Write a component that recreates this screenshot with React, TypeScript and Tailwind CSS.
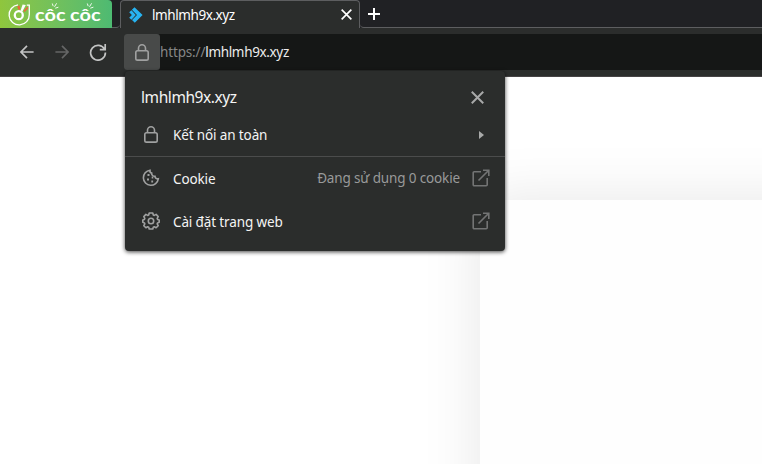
import type { ReactNode } from "react";

type IconProps = { className?: string };

const FONT = "font-['Noto_Sans','Open_Sans',sans-serif]";

function CocCocMark() {
  return (
    <svg width="24" height="24" viewBox="0 0 24 24" fill="none" className="shrink-0">
      <path d="M11 2.800A10.100 10.100 0 1 0 22.300 12.500V3.200h-2.500" stroke="#fff" strokeWidth="1.300" />
      <circle cx="11.800" cy="13.200" r="4" stroke="#fff" strokeWidth="2.300" />
      <path d="M11.300 7.500L10.300 4.200 12.600 3.600 13.200 7.800z" fill="#f0603c" />
      <path d="M13.600 8.500L15.600 2.600 18.800 3 15.400 9.600z" fill="#fff" />
      <path d="M16.500 9L20.400 4.600 21.200 6.200 17.600 10z" fill="#f0603c" />
    </svg>
  );
}

function Word() {
  return (
    <span className="relative inline-block w-[31px]">
      <span className="inline-block origin-left scale-x-[1.14]">côc</span>
      <svg width="8" height="7" viewBox="0 0 8 7" className="absolute -top-[3px] left-[16px]" stroke="#fff" strokeWidth="0.900">
        <path d="M1.300 0.500L2.200 3.200M5.600 0.300L3.500 3.800M7.400 4.200L4.300 5.200" />
      </svg>
    </span>
  );
}

function SiteMark() {
  return (
    <svg width="14" height="16" viewBox="0 0 14 16" className="shrink-0">
      <path d="M5.500 0.200L13.600 8 5.800 15.800 3 13.100 8 8 2.900 2.800z" fill="#27b3f0" />
      <path d="M0.200 5.200L2.400 3.200 6.800 8 2.400 12.800 0.200 10.800 2.900 8z" fill="#27b3f0" />
    </svg>
  );
}

function Cross({ className }: IconProps) {
  return (
    <svg width="13" height="13" viewBox="0 0 12 12" fill="none" stroke="currentColor" className={className}>
      <path d="M0.700 0.700l10.600 10.600M11.300 0.700L0.700 11.300" strokeWidth="1.800" />
    </svg>
  );
}

function Arrow({ className }: IconProps) {
  return (
    <svg width="14" height="14" viewBox="0 0 14 14" fill="none" stroke="currentColor" strokeWidth="1.700" className={className}>
      <path d="M7 0.800L0.900 7 7 13.200M1 7h12.600" />
    </svg>
  );
}

function Reload() {
  return (
    <svg width="18" height="18" viewBox="0 0 18 18" fill="none" stroke="currentColor" strokeWidth="1.700">
      <path d="M15.600 6.400A7.400 7.400 0 1 0 16.400 9.600M16.200 1v5.600h-5.400" />
    </svg>
  );
}

function Lock({ className }: IconProps) {
  return (
    <svg width="14" height="17" viewBox="0 0 14 17" fill="none" stroke="currentColor" strokeWidth="1.600" className={className}>
      <rect x="0.800" y="6.700" width="12.400" height="9.400" rx="1.700" />
      <path d="M3.500 6.500V4.300a3.500 3.500 0 0 1 7 0v2.200" />
    </svg>
  );
}

function Cookie() {
  return (
    <svg width="18" height="18" viewBox="0 0 18 18" fill="none" stroke="currentColor" strokeWidth="1.600">
      <path d="M8 1.300A7.500 7.500 0 1 0 16.300 9.800 2.600 2.600 0 0 1 13 7.400 3 3 0 0 1 9.700 4.100 2.400 2.400 0 0 1 8 1.300z" />
      <path d="M5.500 6h2M5 10.600h2M9.700 8.600h1.600M9.300 12.400h1.800" strokeWidth="2" />
    </svg>
  );
}

function Gear() {
  return (
    <svg width="18" height="18" viewBox="0 0 18 18" fill="none" stroke="currentColor" strokeWidth="1.600" strokeLinejoin="round">
      <path d="M7.200 1h3.600l.500 2 1 .400 1.800-1 2.100 2.200-1 1.800.400 1 1.600.500v2.400l-1.600.600-.400 1 1 1.800-2.100 2.100-1.800-1-1 .400-.500 1.800H7.200l-.500-1.800-1-.400-1.800 1-2.100-2.100 1-1.800-.400-1L.8 10.300V7.900l1.600-.500.400-1-1-1.800 2.100-2.200 1.800 1 1-.400z" />
      <circle cx="9" cy="9" r="2.700" />
    </svg>
  );
}

function External() {
  return (
    <svg width="18" height="18" viewBox="0 0 18 18" fill="none" stroke="currentColor" strokeWidth="1.600">
      <path d="M9 2.700H2.200a1 1 0 0 0-1 1v12a1 1 0 0 0 1 1h12a1 1 0 0 0 1-1V9M11 1.200h5.800V7M16.500 1.500L6.500 11.500" />
    </svg>
  );
}

function Row({ icon, label, children, className }: { icon: ReactNode; label: ReactNode; children?: ReactNode; className: string }) {
  return (
    <div className={`flex items-center pl-[17px] pr-[15px] ${className}`}>
      <span className="flex w-[18px] shrink-0 justify-center text-[#a0a1a1]">{icon}</span>
      <span className="ml-[13px] flex-1 pt-0.5 text-[13.5px] tracking-[-0.13px] whitespace-nowrap text-[#f4f4f4]">{label}</span>
      {children}
    </div>
  );
}

export default function App() {
  return (
    <div className={`relative h-[464px] w-[762px] overflow-hidden bg-white ${FONT}`}>
      <div className="flex h-7 bg-[#202124]">
        <div className="flex w-28 items-center rounded-tr-sm bg-linear-to-r from-[#8fc63d] to-[#4dba72] pl-[7px]">
          <CocCocMark />
          <span className="ml-1 flex gap-[4px] pt-[1px] font-['Lato',sans-serif] text-[17.5px] leading-none font-bold text-white">
            <Word />
            <Word />
          </span>
        </div>
        <div className="w-2 rounded-br-[4px] border-b border-[#5d5e60]" />
        <div className="flex w-60 items-center rounded-t-[4px] border border-b-0 border-[#5d5e60] bg-[#2b2d2c] pr-[7px] pl-2">
          <SiteMark />
          <span className="ml-[9px] flex-1 text-[13.5px] leading-5 tracking-[-0.42px] text-white">lmhlmh9x.xyz</span>
          <Cross className="h-[11px] w-[11px] text-white" />
        </div>
        <div className="flex flex-1 items-center rounded-bl-[4px] border-b border-[#5d5e60] pl-2">
          <svg width="12" height="12" viewBox="0 0 12 12" stroke="#fff" strokeWidth="2">
            <path d="M6 0v12M0 6h12" />
          </svg>
        </div>
      </div>
      <div className="flex h-[49px] items-start border-b border-[#464345] bg-[#2b2d2c] pt-[6px]">
        <div className="flex h-9 w-[124px] items-center pl-5 text-[#c3c4c4]">
          <Arrow />
          <Arrow className="ml-[21px] rotate-180 text-[#656666]" />
          <span className="ml-5"><Reload /></span>
        </div>
        <div className="flex h-9 flex-1 items-center rounded-l-[3px] bg-[#151716]">
          <div className="flex h-9 w-9 items-center justify-center rounded-[3px] bg-[#484a49] text-[#a0a1a1]">
            <Lock />
          </div>
          <span className="text-[13.5px] tracking-[-0.15px] text-[#858686]">https://</span>
          <span className="text-[13.5px] tracking-[-0.35px] text-[#ececec]">lmhlmh9x.xyz</span>
        </div>
      </div>
      <div className="h-[387px] overflow-hidden pt-[123px] pl-[480px]">
        <div className="h-[500px] w-[500px] bg-[#fefefe] shadow-[0_0_56px_rgba(0,0,0,0.1)]" />
      </div>

      <div className="absolute top-[71px] left-[125px] h-[180px] w-[380px] rounded-[4px] bg-[#2b2d2c] shadow-[0_1px_4px_rgba(0,0,0,0.75)]">
        <div className="flex h-[42px] items-center justify-between pt-[10px] pr-[21px] pl-4">
          <span className="pt-0.5 text-[15.5px] tracking-[-0.42px] text-[#f4f4f4]">lmhlmh9x.xyz</span>
          <Cross className="text-[#a8a9a9]" />
        </div>
        <Row className="h-[44px] border-b border-[#4b4c4c]" icon={<Lock />} label="Kết nối an toàn">
          <svg width="5" height="8" viewBox="0 0 5 8" className="mr-[6px]"><path d="M0 0l5 4-5 4z" fill="#a8a9a9" /></svg>
        </Row>
        <Row className="h-[43px]" icon={<span className="pb-0.5"><Cookie /></span>} label="Cookie">
          <span className="mr-3 text-[13.5px] tracking-[-0.14px] text-[#999a9a]">Đang sử dụng 0 cookie</span>
          <span className="pb-0.5 text-[#737474]"><External /></span>
        </Row>
        <Row className="h-[43px]" icon={<span className="pb-0.5"><Gear /></span>} label="Cài đặt trang web">
          <span className="pb-0.5 text-[#737474]"><External /></span>
        </Row>
      </div>
    </div>
  );
}
